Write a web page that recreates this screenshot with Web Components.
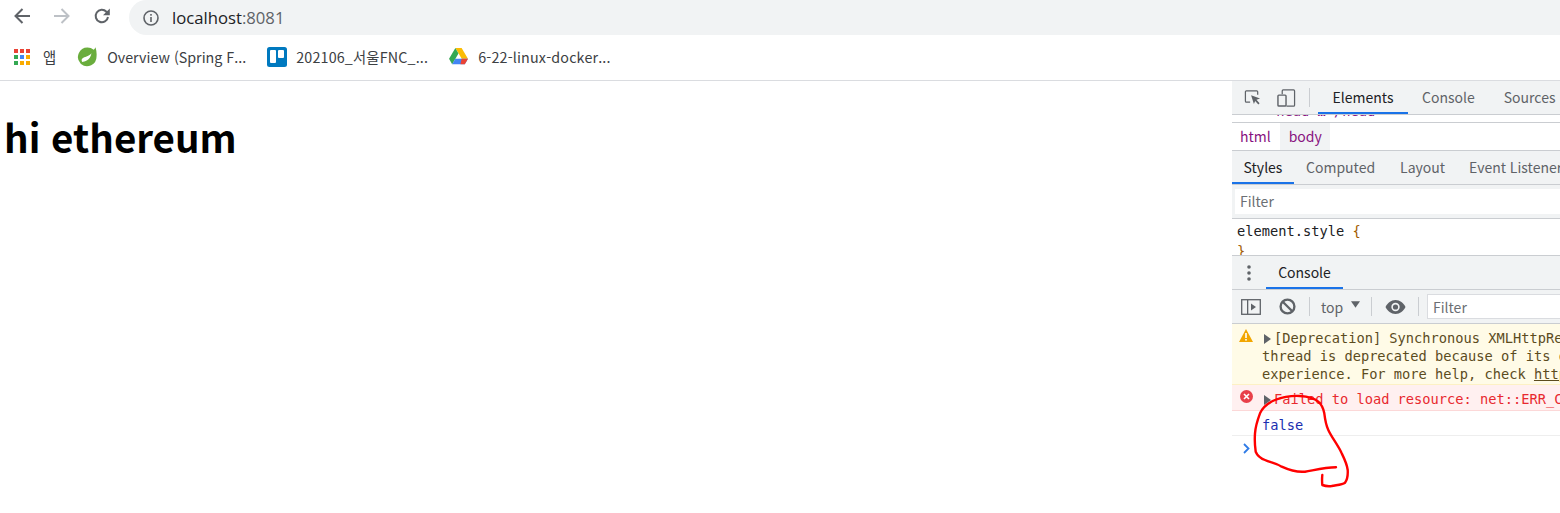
<!DOCTYPE html>
<html lang="ko">
<head>
<meta charset="utf-8">
<title>hi ethereum</title>
<style>
  html, body { margin: 0; height: 513px; overflow: hidden; background: #fff; }
  body { font-family: "Noto Sans CJK KR", "Open Sans", sans-serif; position: relative; }
</style>
</head>
<body>
<browser-toolbar></browser-toolbar>
<bookmark-bar>
  <bookmark-item icon="apps" style="--gap:13px;--after:21px;">앱</bookmark-item>
  <bookmark-item icon="spring" style="--gap:9px;--after:21px;">Overview (Spring F...</bookmark-item>
  <bookmark-item icon="trello" style="--gap:9px;--after:21px;--ls:.17px;">202106_서울FNC_...</bookmark-item>
  <bookmark-item icon="drive" style="--gap:10px;--ls:.17px;">6-22-linux-docker...</bookmark-item>
</bookmark-bar>
<main-area>
  <page-content slot="page">hi ethereum</page-content>
  <dev-tools slot="tools"></dev-tools>
</main-area>
<red-scribble></red-scribble>

<script>
const ICONS = {
  apps: `<svg width="16" height="16" viewBox="0 0 16 16">
    <rect x="0" y="0" width="4" height="4" fill="#ea4335"/><rect x="6" y="0" width="4" height="4" fill="#ea4335"/><rect x="12" y="0" width="4" height="4" fill="#ea4335"/>
    <rect x="0" y="6" width="4" height="4" fill="#34a853"/><rect x="6" y="6" width="4" height="4" fill="#4285f4"/><rect x="12" y="6" width="4" height="4" fill="#f9ab00"/>
    <rect x="0" y="12" width="4" height="4" fill="#34a853"/><rect x="6" y="12" width="4" height="4" fill="#f9ab00"/><rect x="12" y="12" width="4" height="4" fill="#f9ab00"/></svg>`,
  spring: `<svg width="21" height="21" viewBox="0 0 20 20">
    <path d="M17.600 1.200c-.4 1-1 1.800-1.700 2.400A9.600 9.600 0 0 0 10 1.500 9 9 0 0 0 3.400 16.700l.4.4A9 9 0 0 0 18.600 10c.3-3.200-.1-6-1-8.800z" fill="#6aad3d"/>
    <path d="M5 15.200c2-.2 7.500-1 8.800-8.200-3 3.500-6.800 3.300-8.400 4.600-1.300 1-1.200 2.500-.4 3.600z" fill="#fff"/></svg>`,
  trello: `<svg width="20" height="20" viewBox="0 0 20 20">
    <rect width="20" height="20" rx="2.500" fill="#0079bf"/>
    <rect x="3" y="3" width="6" height="13" rx="1" fill="#fff"/><rect x="11" y="3" width="6" height="8" rx="1" fill="#fff"/></svg>`,
  drive: `<svg width="19" height="17" viewBox="0 0 20 18">
    <path d="M6.700 0h6.600l6.700 11.500h-6.600z" fill="#fbbc04"/>
    <path d="M6.700 0 0 11.500 3.300 17.300 10 5.700z" fill="#34a853"/>
    <path d="M3.300 17.300h13.400l3.300-5.800H6.600z" fill="#4285f4"/>
    <path d="M16.700 17.300 20 11.500h-6.700l-1.300 5.800z" fill="#ea4335"/></svg>`
};

class BrowserToolbar extends HTMLElement {
  constructor() {
    super();
    this.attachShadow({ mode: "open" });
    this.shadowRoot.innerHTML = `
      <style>
        :host { display: flex; align-items: flex-start; height: 36px; background: #fff; }
        .btn { flex: none; display: flex; align-items: center; justify-content: center; width: 20px; height: 20px; margin-top: 6px; }
        .back { margin-left: 12px; }
        .forward { margin-left: 20px; }
        .reload { margin-left: 20px; margin-right: 17px; }
        .omni { flex: 1; height: 35px; background: #f1f3f4; border-radius: 18px 0 0 18px; display: flex; align-items: center; padding-left: 14px; font: 16.700px "Open Sans", sans-serif; color: #202124; }
        .omni svg { margin-right: 13px; flex: none; }
        .port { color: #5f6368; }
      </style>
      <span class="btn back"><svg width="18" height="18" viewBox="0 0 18 18"><path d="M17 9H3M9.500 2 2.500 9l7 7" fill="none" stroke="#5f6368" stroke-width="2"/></svg></span>
      <span class="btn forward"><svg width="18" height="18" viewBox="0 0 18 18"><path d="M1 9h14M8.500 2l7 7-7 7" fill="none" stroke="#bdc1c6" stroke-width="2"/></svg></span>
      <span class="btn reload"><svg width="18" height="18" viewBox="0 0 18 18"><path d="M15 10a6.200 6.200 0 1 1-1.600-5.200L15.500 7" fill="none" stroke="#5f6368" stroke-width="2"/><path d="M16.800 1.500v6.800H10z" fill="#5f6368"/></svg></span>
      <div class="omni">
        <svg width="16" height="16" viewBox="0 0 16 16"><circle cx="8" cy="8" r="7" fill="none" stroke="#5f6368" stroke-width="1.600"/><rect x="7.200" y="7" width="1.600" height="5" fill="#5f6368"/><rect x="7.200" y="4" width="1.600" height="1.700" fill="#5f6368"/></svg>
        <span>localhost<span class="port">:8081</span></span>
      </div>`;
  }
}

class BookmarkBar extends HTMLElement {
  constructor() {
    super();
    this.attachShadow({ mode: "open" });
    this.shadowRoot.innerHTML = `
      <style>
        :host { display: flex; align-items: center; height: 44px; padding-left: 14px; box-sizing: border-box; padding-bottom: 3px; background: #fff; }
      </style>
      <slot></slot>`;
  }
}

class BookmarkItem extends HTMLElement {
  constructor() {
    super();
    this.attachShadow({ mode: "open" });
    this.shadowRoot.innerHTML = `
      <style>
        :host { display: flex; align-items: center; gap: var(--gap, 9px); margin-right: var(--after, 0); font: 14.300px "Noto Sans CJK KR", "Open Sans", sans-serif; letter-spacing: var(--ls, 0); color: #3c4043; white-space: nowrap; }
        .ic { display: flex; flex: none; }
      </style>
      <span class="ic"></span><slot></slot>`;
  }
  connectedCallback() {
    this.shadowRoot.querySelector(".ic").innerHTML = ICONS[this.getAttribute("icon")] || "";
  }
}

class MainArea extends HTMLElement {
  constructor() {
    super();
    this.attachShadow({ mode: "open" });
    this.shadowRoot.innerHTML = `
      <style>
        :host { display: grid; grid-template-columns: 1232px 328px; height: 433px; border-top: 1px solid #dadce0; box-sizing: border-box; overflow: hidden; }
      </style>
      <slot name="page"></slot><slot name="tools"></slot>`;
  }
}

class PageContent extends HTMLElement {
  constructor() {
    super();
    this.attachShadow({ mode: "open" });
    this.shadowRoot.innerHTML = `
      <style>
        :host { display: block; background: #fff; padding: 31px 0 0 4px; }
        h1 { margin: 0; font: 700 38.500px/48px "Noto Sans CJK KR", "Open Sans", sans-serif; color: #000; }
      </style>
      <h1><slot></slot></h1>`;
  }
}

class DtTab extends HTMLElement {
  constructor() {
    super();
    this.attachShadow({ mode: "open" });
    this.shadowRoot.innerHTML = `
      <style>
        :host { display: flex; align-items: center; justify-content: center; padding: 0 var(--pad, 14px); box-sizing: border-box; color: #5f6368; white-space: nowrap; border-bottom: 2px solid transparent; flex: none; }
        :host([active]) { color: #202124; border-bottom-color: #1a73e8; }
      </style>
      <slot></slot>`;
  }
}

class DevTools extends HTMLElement {
  constructor() {
    super();
    this.attachShadow({ mode: "open" });
    this.shadowRoot.innerHTML = `
      <style>
        :host { display: flex; flex-direction: column; height: 432px; overflow: hidden; background: #fff; font: 14px "Noto Sans CJK KR", "Open Sans", sans-serif; color: #5f6368; }
        .bar { display: flex; align-items: stretch; background: #f1f3f4; border-bottom: 1px solid #cacdd1; flex: none; box-sizing: border-box; }
        .sep { width: 1px; background: #cacdd1; flex: none; }
        .ic { display: flex; align-items: center; flex: none; }
        .main-tabs { height: 34px; }
        .sliver { height: 8px; overflow: hidden; border-bottom: 1px solid #cacdd1; flex: none; box-sizing: border-box; font: 13.700px/8px "DejaVu Sans Mono", monospace; color: #881280; padding-left: 36px; }
        .sliver span { position: relative; top: -8px; }
        .crumbs { height: 28px; display: flex; border-bottom: 1px solid #cacdd1; box-sizing: border-box; flex: none; color: #881280; }
        .crumbs span { display: flex; align-items: center; padding: 0 9px 2px 8px; }
        .crumbs .on { background: #f1f3f4; padding: 0 8px 2px 9px; }
        .sub-tabs { height: 34px; }
        .filter-row { height: 34px; padding: 4px 0 4px 3px; }
        .input { flex: 1; background: #fff; display: flex; align-items: center; padding: 0 0 2px 5px; color: #6b6f74; }
        .rules { height: 36px; flex: none; overflow: hidden; font: 13.700px/20px "DejaVu Sans Mono", monospace; color: #202124; padding: 2px 0 0 5px; box-sizing: border-box; }
        .brace { color: #a15c00; }
        .drawer { height: 35px; border-top: 1px solid #cacdd1; }
        .tool { height: 34px; }
        .sm { display: flex; align-items: center; color: #5f6368; }
      </style>
      <div class="bar main-tabs">
        <span class="ic" style="margin-left:12px"><svg width="17" height="17" viewBox="0 0 18 18"><path d="M6.500 14H2.500a1 1 0 0 1-1-1V3a1 1 0 0 1 1-1h11a1 1 0 0 1 1 1v3" fill="none" stroke="#5f6368" stroke-width="1.300"/><path d="M7.500 6.500 17 10l-3.800 1.500 3.300 3.700-1.300 1.300-3.400-3.700L10.500 16z" fill="#5f6368"/></svg></span>
        <span class="ic" style="margin-left:16px"><svg width="19" height="20" viewBox="0 0 20 20"><path d="M5.500 6V2.500a1 1 0 0 1 1-1h11a1 1 0 0 1 1 1v15a1 1 0 0 1-1 1H10" fill="none" stroke="#5f6368" stroke-width="1.300"/><rect x="1" y="7" width="8.500" height="11.500" rx="1" fill="none" stroke="#5f6368" stroke-width="1.500"/></svg></span>
        <span class="sep" style="margin:7px 8px 7px 13px"></span>
        <dt-tab active style="--pad:14px;width:90px">Elements</dt-tab>
        <dt-tab style="--pad:14px;">Console</dt-tab>
        <dt-tab style="--pad:15px;">Sources</dt-tab>
      </div>
      <div class="sliver"><span>&lt;head&gt;…&lt;/head&gt;</span></div>
      <div class="crumbs"><span>html</span><span class="on">body</span></div>
      <div class="bar sub-tabs">
        <dt-tab active style="--pad:12px;width:62px">Styles</dt-tab>
        <dt-tab style="--pad:12px;">Computed</dt-tab>
        <dt-tab style="--pad:13px;">Layout</dt-tab>
        <dt-tab style="--pad:11px;">Event Listeners</dt-tab>
      </div>
      <div class="bar filter-row"><div class="input">Filter</div></div>
      <div class="rules">element.style <span class="brace">{</span><br><span class="brace">}</span></div>
      <div class="bar drawer">
        <span class="ic" style="margin-left:15px;width:8px"><svg width="4" height="16" viewBox="0 0 4 16"><circle cx="2" cy="2" r="1.800" fill="#5f6368"/><circle cx="2" cy="8" r="1.800" fill="#5f6368"/><circle cx="2" cy="14" r="1.800" fill="#5f6368"/></svg></span>
        <dt-tab active style="--pad:12px;margin-left:11px;width:77px">Console</dt-tab>
      </div>
      <div class="bar tool">
        <span class="ic" style="margin-left:9px"><svg width="20" height="16" viewBox="0 0 20 16"><rect x=".7" y=".7" width="18.600" height="14.600" fill="none" stroke="#5f6368" stroke-width="1.300"/><rect x="6" y="1" width="1.300" height="14" fill="#5f6368"/><path d="M10 4.500 15 8l-5 3.500z" fill="#5f6368"/></svg></span>
        <span class="ic" style="margin-left:18px"><svg width="17" height="17" viewBox="0 0 16 16"><circle cx="8" cy="8" r="6.500" fill="none" stroke="#5f6368" stroke-width="2.200"/><path d="M3.500 3.500 12.500 12.500" stroke="#5f6368" stroke-width="2.200"/></svg></span>
        <span class="sep" style="margin:7px 11px 7px 13px"></span>
        <span class="sm" style="width:22px">top</span>
        <span class="ic" style="margin-left:8px;margin-bottom:4px"><svg width="9" height="7" viewBox="0 0 10 7"><path d="M0 0h10L5 7z" fill="#5f6368"/></svg></span>
        <span class="sep" style="margin:7px 13px 7px 11px"></span>
        <span class="ic"><svg width="21" height="14" viewBox="0 0 20 14"><path d="M10 0C5.500 0 2 3 0 7c2 4 5.500 7 10 7s8-3 10-7c-2-4-5.500-7-10-7z" fill="#5f6368"/><circle cx="10" cy="7" r="4.200" fill="#f1f3f4"/><circle cx="10" cy="7" r="2.600" fill="#5f6368"/></svg></span>
        <span class="sep" style="margin:7px 8px 7px 12px"></span>
        <div class="input" style="margin:4px -3px 4px 0;border:1px solid #dadce0;padding:0 0 0 5px">Filter</div>
      </div>
      <console-msg kind="warn"><div>[Deprecation] Synchronous XMLHttpRequest on the main</div><div>thread is deprecated because of its detrimental effects</div><div>experience. For more help, check <u>https://xhr.spec.whatwg.org/</u></div></console-msg>
      <console-msg kind="error">Failed to load resource: net::ERR_CONNECTION_REFUSED</console-msg>
      <console-msg kind="log">false</console-msg>
      <console-msg kind="prompt"></console-msg>`;
  }
}

class ConsoleMsg extends HTMLElement {
  constructor() {
    super();
    this.attachShadow({ mode: "open" });
    this.shadowRoot.innerHTML = `
      <style>
        :host { display: flex; flex: none; font: 13.700px/18px "DejaVu Sans Mono", monospace; white-space: nowrap; overflow: hidden; box-sizing: border-box; }
        :host([kind=warn]) { background: #fffbe7; border-bottom: 1px solid #fdf1c4; color: #5c4c1e; height: 61px; padding-top: 5px; }
        :host([kind=error]) { background: #fff0f0; border-bottom: 1px solid #fcd8d8; color: #e8292f; height: 26px; padding-top: 5px; }
        :host([kind=log]) { color: #1a2fb0; height: 25px; padding-top: 5px; border-bottom: 1px solid #eee; }
        :host([kind=prompt]) { height: 26px; }
        .gutter { width: 30px; flex: none; position: relative; }
        .gutter svg { position: absolute; }
        .body { flex: none; }
      </style>
      <div class="gutter"></div><div class="body"><slot></slot></div>`;
  }
  connectedCallback() {
    const tri = `<svg style="left:32px;top:5px;z-index:1" width="7" height="10" viewBox="0 0 7 10"><path d="M0 0l7 5-7 5z" fill="#5f6368"/></svg>`;
    const gutter = {
      warn: `<svg style="left:7px;top:0" width="14" height="13" viewBox="0 0 14 13"><path d="M7 0l7 13H0z" fill="#f2a600"/><rect x="6.200" y="4" width="1.600" height="5" fill="#fff"/><rect x="6.200" y="10" width="1.600" height="1.600" fill="#fff"/></svg>`,
      error: `<svg style="left:8px;top:0" width="13" height="13" viewBox="0 0 13 13"><circle cx="6.500" cy="6.500" r="6.500" fill="#e8404a"/><path d="M4 4l5 5M9 4l-5 5" stroke="#fff" stroke-width="1.600"/></svg>`,
      prompt: `<svg style="left:11px;top:7px" width="7" height="11" viewBox="0 0 7 11"><path d="M1 1l4.500 4.500L1 10" fill="none" stroke="#2f7be6" stroke-width="1.800"/></svg>`
    }[this.getAttribute("kind")] || "";
    this.shadowRoot.querySelector(".gutter").innerHTML = gutter;
    const kind = this.getAttribute("kind");
    if (kind === "warn" || kind === "error") {
      this.shadowRoot.querySelector(".gutter").insertAdjacentHTML("beforeend", tri);
      if (kind === "error") this.shadowRoot.querySelector(".body").style.paddingLeft = "12px";
      else {
        const s = document.createElement("style");
        s.textContent = "::slotted(div:first-child){text-indent:12px}";
        this.shadowRoot.appendChild(s);
      }
    }
  }
}

class RedScribble extends HTMLElement {
  constructor() {
    super();
    this.attachShadow({ mode: "open" });
    this.shadowRoot.innerHTML = `
      <style>
        :host { position: absolute; left: 0; top: 0; width: 1560px; height: 513px; pointer-events: none; }
      </style>
      <svg width="1560" height="513" viewBox="0 0 1560 513">
        <path d="M1336 467.300C1325 467.500 1315 470 1305 471.700C1296 472.500 1290 470.500 1281.700 466.700C1276 463 1270 462.500 1265 460C1260 458 1257 455 1255.700 451.700C1254.700 445 1254.500 440 1255 433.300C1255.500 426 1257.500 420 1260 413.300C1263 407 1268 403 1275 400C1283 397 1292 395.500 1300 396C1308 396.500 1314 398 1318.300 401.700C1322 405 1323.500 409 1324.300 413.300C1325 419 1326 425 1328.300 430C1332 438 1338 445 1341.700 453.300C1344.500 459 1347 464 1347.700 470C1348 475 1347 480 1345 482.700C1342 485 1336 485 1331.700 486C1328 486.500 1325 486 1322.300 485C1322 482 1322 478 1322.300 475" fill="none" stroke="#f00" stroke-width="2.400" stroke-linecap="round" stroke-linejoin="round"/>
      </svg>`;
  }
}

customElements.define("browser-toolbar", BrowserToolbar);
customElements.define("bookmark-bar", BookmarkBar);
customElements.define("bookmark-item", BookmarkItem);
customElements.define("main-area", MainArea);
customElements.define("page-content", PageContent);
customElements.define("dt-tab", DtTab);
customElements.define("console-msg", ConsoleMsg);
customElements.define("dev-tools", DevTools);
customElements.define("red-scribble", RedScribble);
</script>
</body>
</html>
